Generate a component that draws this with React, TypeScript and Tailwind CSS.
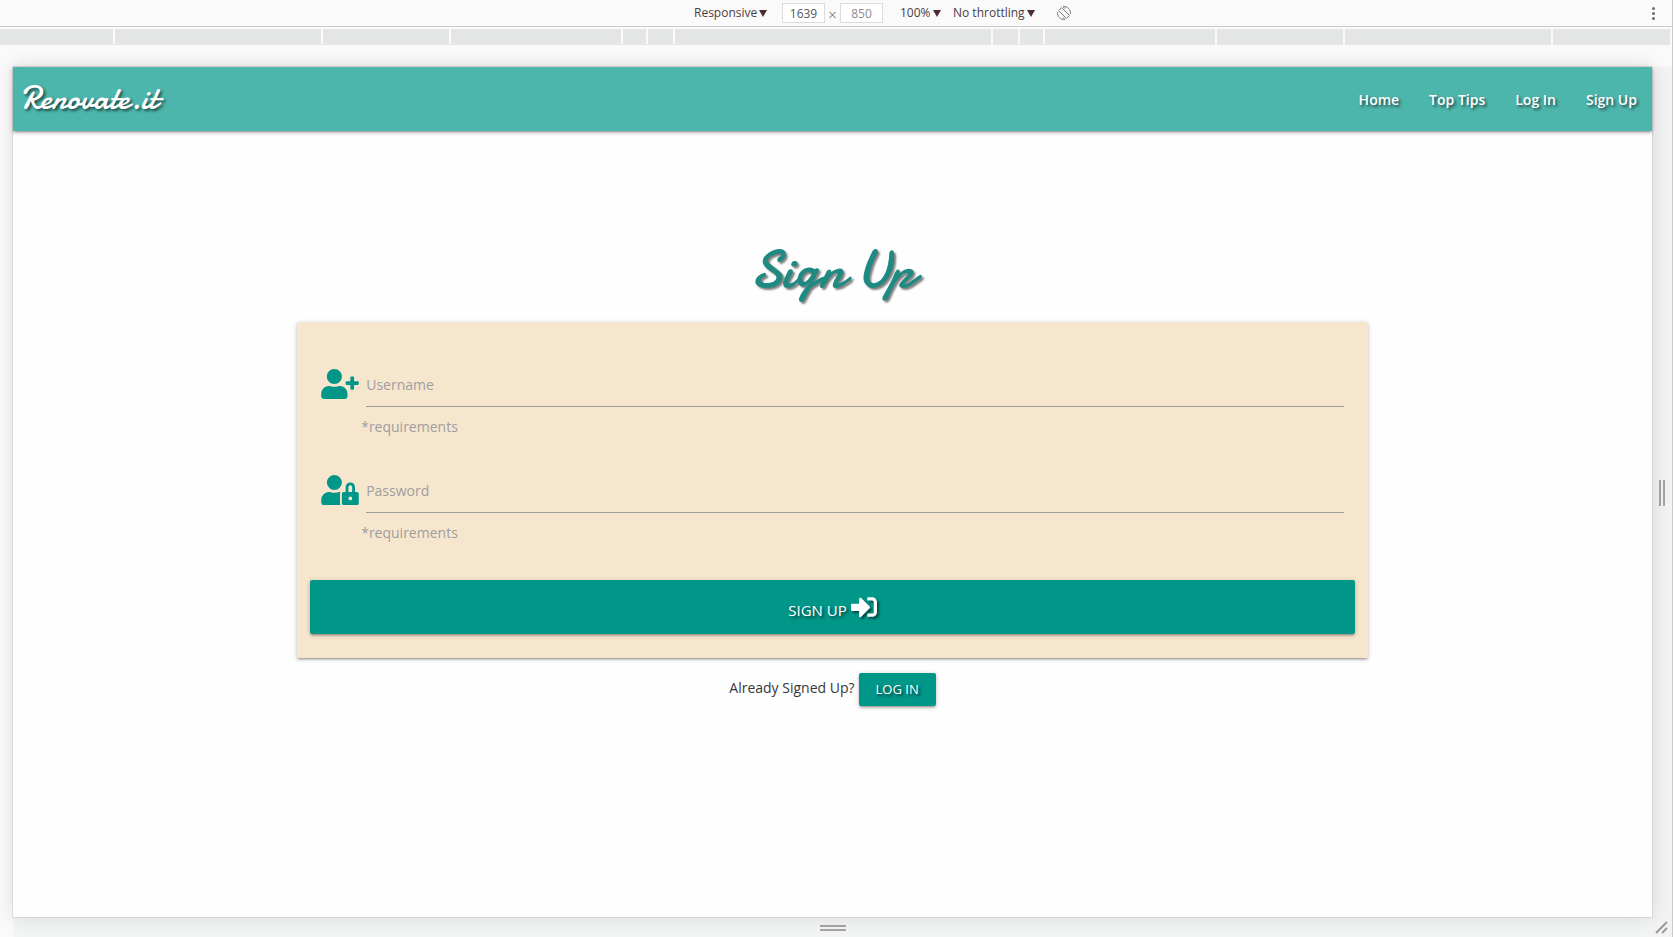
import React from "react";
import { FaSignInAlt, FaUserLock, FaUserPlus } from "react-icons/fa";

const sans = "font-['Open_Sans','Noto_Sans',sans-serif]";
const script = "font-['Yellowtail','Damion',cursive]";

function Arrow() {
  return (
    <svg viewBox="0 0 8 7" className="pointer-events-none h-[7px] w-2 fill-[#4a2c35]" aria-hidden="true">
      <path d="M0 0h8L4 7z" />
    </svg>
  );
}

function ToolbarSelect({ label, value, width }: { label: string; value: string; width: string }) {
  return (
    <div className="flex items-center">
      <select aria-label={label} className={`h-5 appearance-none bg-transparent text-xs text-[#4a4044] ${width}`}>
        <option>{value}</option>
      </select>
      <Arrow />
    </div>
  );
}

function Toolbar() {
  return (
    <div className="flex h-[27px] items-center border-b border-[#cacaca] bg-[#fafafa] pl-[113px]">
      <div className="flex flex-1 items-center justify-center">
        <ToolbarSelect label="Device" value="Responsive" width="w-[65px]" />
        <div className="ml-[15px] flex items-center gap-1 text-xs text-[#55555b]">
          <input aria-label="Width" defaultValue="1639" className="h-5 w-[43px] border border-[#dcdcdc] bg-white text-center" />
          <svg viewBox="0 0 8 8" className="mt-1 h-2 w-[7px] stroke-[#55555b]" aria-label="by">
            <path d="M.5 .5l7 7M7.500 .5L.5 7.500" />
          </svg>
          <input aria-label="Height" defaultValue="850" className="h-5 w-[43px] border border-[#dcdcdc] bg-white text-center text-[#8c8c90]" />
        </div>
        <div className="ml-[17px] flex gap-3">
          <ToolbarSelect label="Zoom" value="100%" width="w-[33px]" />
          <ToolbarSelect label="Throttling" value="No throttling" width="w-[74px]" />
        </div>
        <button aria-label="Rotate" className="ml-[22px]">
          <svg viewBox="0 0 14 14" className="h-[14px] w-[14px] fill-none stroke-[#7a7a7a]">
            <path d="M4.600 1.600L12.400 9.400L9.400 12.400L1.600 4.600z" />
            <path d="M6 .6A6.400 6.400 0 0 1 13.400 8M8 13.400A6.400 6.400 0 0 1 .6 6" />
            <path d="M6 .6l2.200 2M8 13.400l-2.200-2" />
          </svg>
        </button>
      </div>
      <button aria-label="More options" className="mr-4 flex w-[4px] flex-col gap-[2px]">
        <span className="h-[3px] w-[3px] rounded-full bg-[#6b6b6b]" />
        <span className="h-[3px] w-[3px] rounded-full bg-[#6b6b6b]" />
        <span className="h-[3px] w-[3px] rounded-full bg-[#6b6b6b]" />
      </button>
    </div>
  );
}

const segments = [
  "w-[206px]",
  "w-[126px]",
  "w-[170px]",
  "w-[23px]",
  "w-[25px]",
  "w-[316px]",
  "w-[25px]",
  "w-[23px]",
  "w-[170px]",
  "w-[126px]",
  "w-[206px]",
];

function Ruler() {
  return (
    <div className="mt-[2px] mr-[2px] flex h-4 gap-[2px] border-b border-[#e4e6e5]">
      <div className="grow basis-0 bg-[#e4e6e5]" />
      {segments.map((width, i) => (
        <div key={i} className={`bg-[#e4e6e5] ${width}`} />
      ))}
      <div className="grow basis-1 bg-[#e4e6e5]" />
    </div>
  );
}

function Navbar() {
  return (
    <nav className="flex h-16 items-center justify-between bg-[#4db6ac] pr-[15px] pl-2 text-white shadow-[0_2px_2px_0_rgba(0,0,0,0.14),0_3px_1px_-2px_rgba(0,0,0,0.12),0_1px_5px_0_rgba(0,0,0,0.2)]">
      <a href="#home" className={`text-[33px] [text-shadow:2px_2px_3px_rgba(0,0,0,0.6)] ${script}`}>
        Renovate.it
      </a>
      <div className="flex gap-[30px] text-[14px] font-semibold [text-shadow:2px_2px_3px_rgba(0,0,0,0.6)]">
        <a href="#home">Home</a>
        <a href="#tips">Top Tips</a>
        <a href="#login">Log In</a>
        <a href="#signup">Sign Up</a>
      </div>
    </nav>
  );
}

function Field({ id, label, type, icon }: { id: string; label: string; type: string; icon: React.ReactNode }) {
  return (
    <div className="h-[106px] px-[11px]">
      <div className="flex">
        <label htmlFor={id} aria-label={label} className="mt-[7px] mr-[7px] text-[#009688]">
          {icon}
        </label>
        <input
          id={id}
          type={type}
          placeholder={label}
          className="h-[45px] min-w-0 flex-1 border-b border-[#9e9e9e] bg-transparent text-[14px] text-[#444] outline-none placeholder:text-[#9e9e9e]"
        />
      </div>
      <p className="mt-[10px] ml-10 text-[14px] leading-5 text-[#9e9e9e]">*requirements</p>
    </div>
  );
}

const raised =
  "shadow-[0_2px_2px_0_rgba(0,0,0,0.14),0_3px_1px_-2px_rgba(0,0,0,0.12),0_1px_5px_0_rgba(0,0,0,0.2)]";

function SignUpPage() {
  return (
    <main className="mx-auto w-2/3 px-[11px] pt-[107px]">
      <h1 className={`text-center text-[54px] leading-[64px] text-[#1f8a82] [text-shadow:2px_2px_2px_rgba(0,0,0,0.5)] ${script}`}>
        Sign Up
      </h1>
      <form className={`mt-5 rounded-[2px] bg-[#f6e6ce] px-[13px] pt-10 pb-6 ${raised}`}>
        <Field id="username" label="Username" type="text" icon={<FaUserPlus className="h-[30px] w-[38px]" />} />
        <Field id="password" label="Password" type="password" icon={<FaUserLock className="h-[30px] w-[38px]" />} />
        <button
          type="button"
          className={`mt-[6px] flex h-[54px] w-full items-center justify-center gap-1 rounded-[2px] bg-[#009688] text-[15px] text-white [text-shadow:2px_2px_3px_rgba(0,0,0,0.6)] ${raised}`}
        >
          <span className="mt-[6px]">SIGN UP</span>
          <FaSignInAlt className="h-[26px] w-[26px] drop-shadow-[2px_2px_1px_rgba(0,0,0,0.5)]" />
        </button>
      </form>
      <div className="mt-[15px] flex items-start justify-center gap-1 text-[14px] text-[#37373c]">
        <p className="leading-[30px]">Already Signed Up?</p>
        <a
          href="#login"
          className={`flex h-[33px] items-center rounded-[2px] bg-[#009688] px-[17px] text-[13px] text-white [text-shadow:2px_2px_3px_rgba(0,0,0,0.6)] ${raised}`}
        >
          LOG IN
        </a>
      </div>
    </main>
  );
}

export default function App() {
  return (
    <div className={`flex min-h-screen flex-col border-r border-[#cacaca] bg-[#fafafa] ${sans}`}>
      <Toolbar />
      <Ruler />
      <div className="flex flex-1 overflow-hidden pt-[22px] pl-[13px]">
        <div className="flex min-w-0 flex-1 flex-col">
          <div className="relative flex-1 bg-[#fefefe] shadow-[0_0_0_1px_rgba(0,0,0,0.08),0_0_20px_rgba(0,0,0,0.12)]">
            <Navbar />
            <SignUpPage />
          </div>
          <div className="flex h-5 flex-col items-center gap-[2px] bg-[#f3f4f4] pt-2">
            <span className="h-[2px] w-[26px] bg-[#a5a5a8]" />
            <span className="h-[2px] w-[26px] bg-[#a5a5a8]" />
          </div>
        </div>
        <div className="flex w-5 flex-col items-center bg-[#f3f3f3]">
          <div className="flex flex-1 items-center gap-[2px] pt-[2px]">
            <span className="h-[26px] w-[2px] bg-[#a5a5a8]" />
            <span className="h-[26px] w-[2px] bg-[#a5a5a8]" />
          </div>
          <svg viewBox="0 0 20 20" className="h-5 w-5 fill-none stroke-[#9a9a9a] stroke-2" aria-hidden="true">
            <path d="M4 16L15 5M10 16l5-5" />
          </svg>
        </div>
      </div>
    </div>
  );
}
